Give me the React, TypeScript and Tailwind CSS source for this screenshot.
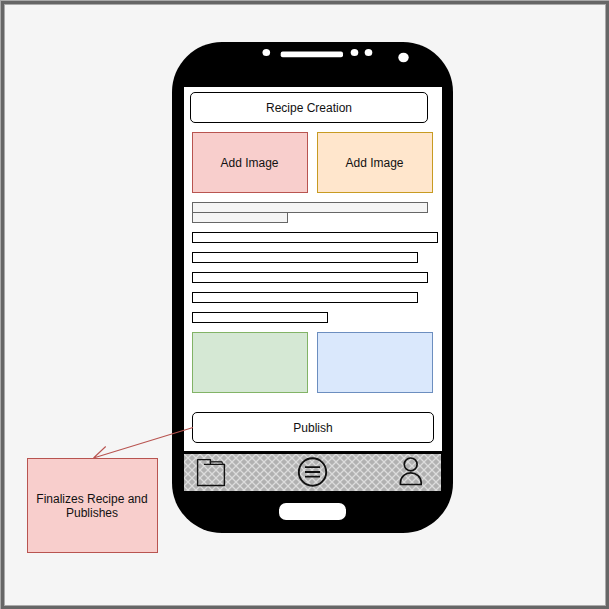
import React from "react";

function Bar({ className }: { className: string }) {
  return <div className={`h-[11px] border ${className}`} />;
}

function PhoneTop() {
  return (
    <svg className="block h-[45px] w-[281px] shrink-0" viewBox="172 42 281 45" fill="#fff">
      <ellipse cx="266.3" cy="52.5" rx="3.8" ry="3.5" />
      <rect x="280.7" y="51.6" width="62.3" height="5.6" rx="2" />
      <ellipse cx="354.5" cy="52.5" rx="3.8" ry="3.5" />
      <ellipse cx="368.5" cy="52.5" rx="3.8" ry="3.5" />
      <ellipse cx="403.5" cy="57.5" rx="5.2" ry="4.8" />
    </svg>
  );
}

function TabBar() {
  return (
    <svg className="block h-[37px] w-[257px]" viewBox="184 454 257 37">
      <defs>
        <pattern id="hatch" x="184" y="454" width="8" height="8" patternUnits="userSpaceOnUse">
          <rect width="8" height="8" fill="#b1b1b1" />
          <path d="M-1 -1L9 9M-1 9L9 -1" stroke="#dcdcdc" strokeWidth="1.3" />
        </pattern>
      </defs>
      <rect x="184" y="454" width="257" height="37" fill="url(#hatch)" />
      <g fill="none" stroke="#111" strokeWidth="1.4" strokeLinejoin="round">
        <path d="M204 464.4H224.4V485.5H197.6V459.6H210.4V464" />
        <path d="M210.5 461.7H221.5L223 464" stroke="#333" />
        <circle cx="312.5" cy="472" r="13.7" strokeWidth="1.9" />
        <path d="M305 467.2H320M305 472H320M305 476.6H320" strokeWidth="1.8" />
        <circle cx="410.7" cy="464.4" r="6.4" strokeWidth="1.7" />
        <path d="M400.4 484.5V482.5C401 469.8 420.5 469.8 421.2 482.5V484.5Z" strokeWidth="1.7" />
      </g>
    </svg>
  );
}

export default function App() {
  return (
    <div className="h-[609px] w-[609px] border-t border-l border-[#aaa] font-['Liberation_Sans',Arial,sans-serif] text-[12px] leading-[14px] text-[#111]">
      <div className="h-[608px] w-[608px] border-[3px] border-[#666]">
        <div className="relative h-[602px] w-[602px] border border-[#aaa] bg-[#f5f5f5]">
          <div className="absolute top-[37px] left-[167px] flex h-[491px] w-[281px] flex-col rounded-[50px] bg-black">
            <PhoneTop />
            <div className="ml-3 flex h-[364px] w-[258px] flex-col bg-white pl-2">
              <div className="mt-[5px] -ml-[2px] flex h-[31px] w-[238px] items-center justify-center rounded-[5px] border border-black">
                Recipe Creation
              </div>
              <div className="mt-[9px] flex gap-[9px]">
                <div className="flex h-[61px] w-[116px] items-center justify-center border border-[#b85450] bg-[#f8cecc] pr-px">Add Image</div>
                <div className="flex h-[61px] w-[116px] items-center justify-center border border-[#c79b22] bg-[#ffe6cc] pr-px">Add Image</div>
              </div>
              <div className="mt-[9px] flex flex-col">
                <Bar className="w-[236px] border-[#666] bg-[#f5f5f5]" />
                <Bar className="-mt-px w-[96px] border-[#666] bg-[#f5f5f5]" />
              </div>
              <div className="mt-[9px] flex flex-col gap-[9px]">
                <Bar className="w-[246px] border-black" />
                <Bar className="w-[226px] border-black" />
                <Bar className="w-[236px] border-black" />
                <Bar className="w-[226px] border-black" />
                <Bar className="w-[136px] border-black" />
              </div>
              <div className="mt-[9px] flex gap-[9px]">
                <div className="h-[61px] w-[116px] border border-[#82b366] bg-[#d5e8d4]" />
                <div className="h-[61px] w-[116px] border border-[#6c8ebf] bg-[#dae8fc]" />
              </div>
              <div className="mt-[19px] flex h-[31px] w-[242px] items-center justify-center rounded-[5px] border border-black">
                Publish
              </div>
            </div>
            <div className="mt-[3px] ml-3">
              <TabBar />
            </div>
            <div className="mt-[12px] ml-[107px] h-[17px] w-[67px] rounded-[7px] bg-white" />
          </div>
          <svg className="absolute top-[417px] left-[83px] h-[40px] w-[110px]" viewBox="88 422 110 40" fill="none" stroke="#b85450">
            <path d="M193 427.5L93.5 458M105.7 446.5L93.5 458" strokeWidth="1.1" />
          </svg>
          <div className="absolute top-[453px] left-[22px] flex h-[95px] w-[131px] items-center justify-center border border-[#b85450] bg-[#f8cecc] pr-px text-center">
            <span>
              Finalizes Recipe and
              <br />
              Publishes
            </span>
          </div>
        </div>
      </div>
    </div>
  );
}
